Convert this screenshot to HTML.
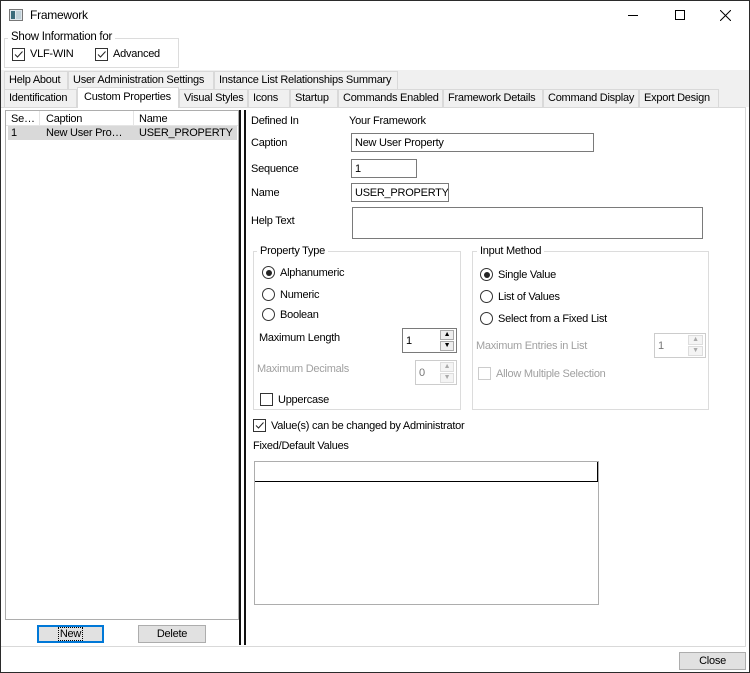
<!DOCTYPE html>
<html><head><style>
*{box-sizing:border-box;margin:0;padding:0}
body{width:750px;height:673px;position:relative;background:#fff;font-family:"Liberation Sans",sans-serif;font-size:11px;letter-spacing:-0.25px;color:#000;overflow:hidden}
.a{position:absolute;white-space:nowrap}
.win{position:absolute;left:0;top:0;width:750px;height:673px;border:1px solid #2b2b2b}
.tab{position:absolute;height:18px;background:#f0f0f0;border:1px solid #d9d9d9;border-bottom:none;padding:2px 0 0 4px;white-space:nowrap;overflow:hidden}
.in{position:absolute;border:1px solid #7a7a7a;background:#fff;padding:3px 3px;white-space:nowrap;overflow:hidden}
.gb{position:absolute;border:1px solid #dcdcdc}
.rb{position:absolute;width:13px;height:13px;border:1px solid #333;border-radius:50%;background:#fff}
.rb.on::after{content:"";position:absolute;left:2.5px;top:2.5px;width:6px;height:6px;border-radius:50%;background:#222}
.cb{position:absolute;width:13px;height:13px;border:1px solid #333;background:#fff}
.dis{color:#a0a0a0}
.btn{position:absolute;background:#e1e1e1;border:1px solid #adadad;text-align:center;padding-top:2px}
</style></head><body>
<div class="win"></div>
<svg class="a" style="left:9px;top:9px" width="14" height="12"><rect x="0.5" y="0.5" width="13" height="11" fill="#dfe6ec" stroke="#777"/><rect x="2" y="2" width="4" height="8" fill="#3a6a7a"/><rect x="7" y="2" width="5" height="8" fill="#c0d0d8"/></svg>
<div class="a" style="left:30px;top:8px;font-size:12px">Framework</div>
<div class="a" style="left:628px;top:15px;width:10px;height:1px;background:#000"></div>
<div class="a" style="left:675px;top:10px;width:10px;height:10px;border:1px solid #000"></div>
<svg class="a" style="left:720px;top:10px" width="11" height="11"><path d="M0 0L11 11M11 0L0 11" stroke="#000" stroke-width="1"/></svg>
<div class="gb" style="left:4px;top:38px;width:175px;height:30px"></div>
<div class="a" style="left:8px;top:31px;background:#fff;padding:0 3px;font-size:11.5px">Show Information for</div>
<div class="cb" style="left:12px;top:48px"></div><svg class="a" style="left:13px;top:49px" width="11" height="11"><path d="M2 5.5L4.5 8L9.5 2.5" stroke="#222" fill="none"/></svg>
<div class="a" style="left:30px;top:48px">VLF-WIN</div>
<div class="cb" style="left:95px;top:48px"></div><svg class="a" style="left:96px;top:49px" width="11" height="11"><path d="M2 5.5L4.5 8L9.5 2.5" stroke="#222" fill="none"/></svg>
<div class="a" style="left:113px;top:48px">Advanced</div>
<div class="a" style="left:1px;top:70px;width:748px;height:37px;background:#f0f0f0"></div>
<div class="tab" style="left:4px;top:71px;width:64px">Help About</div>
<div class="tab" style="left:68px;top:71px;width:146px">User Administration Settings</div>
<div class="tab" style="left:214px;top:71px;width:184px">Instance List Relationships Summary</div>
<div class="tab" style="left:4px;top:89px;width:73px">Identification</div>
<div class="tab" style="left:179px;top:89px;width:69px">Visual Styles</div>
<div class="tab" style="left:248px;top:89px;width:42px">Icons</div>
<div class="tab" style="left:290px;top:89px;width:48px">Startup</div>
<div class="tab" style="left:338px;top:89px;width:105px">Commands Enabled</div>
<div class="tab" style="left:443px;top:89px;width:100px">Framework Details</div>
<div class="tab" style="left:543px;top:89px;width:96px">Command Display</div>
<div class="tab" style="left:639px;top:89px;width:80px">Export Design</div>
<div class="a" style="left:1px;top:107px;width:745px;height:540px;border:1px solid #d9d9d9;border-left:none;background:#fff"></div>
<div class="tab" style="left:77px;top:87px;width:102px;height:21px;background:#fff;padding-top:3px;padding-left:6px">Custom Properties</div>
<div class="a" style="left:5px;top:110px;width:234px;height:510px;border:1px solid #adadad"></div>
<div class="a" style="left:6px;top:111px;width:232px;height:15px;border-bottom:1px solid #e5e5e5"></div>
<div class="a" style="left:39px;top:111px;width:1px;height:15px;background:#e5e5e5"></div>
<div class="a" style="left:133px;top:111px;width:1px;height:15px;background:#e5e5e5"></div>
<div class="a" style="left:11px;top:113px">Se…</div>
<div class="a" style="left:46px;top:113px">Caption</div>
<div class="a" style="left:139px;top:113px">Name</div>
<div class="a" style="left:8px;top:126px;width:229px;height:14px;background:#d9d9d9"></div>
<div class="a" style="left:11px;top:127px">1</div>
<div class="a" style="left:46px;top:127px">New User Pro…</div>
<div class="a" style="left:139px;top:127px">USER_PROPERTY</div>
<div class="btn" style="left:37px;top:625px;width:67px;height:18px;border:2px solid #0078d7;background:#e1e1e1;padding-top:1px"><span style="outline:1px dotted #000;padding:0 1px">New</span></div>
<div class="btn" style="left:138px;top:625px;width:68px;height:18px">Delete</div>
<div class="a" style="left:239px;top:110px;width:2px;height:535px;background:#111"></div>
<div class="a" style="left:244px;top:110px;width:2px;height:535px;background:#111"></div>
<div class="a" style="left:251px;top:115px">Defined In</div>
<div class="a" style="left:349px;top:115px">Your Framework</div>
<div class="a" style="left:251px;top:137px">Caption</div>
<div class="in" style="left:351px;top:133px;width:243px;height:19px">New User Property</div>
<div class="a" style="left:251px;top:163px">Sequence</div>
<div class="in" style="left:351px;top:159px;width:66px;height:19px">1</div>
<div class="a" style="left:251px;top:187px">Name</div>
<div class="in" style="left:351px;top:183px;width:98px;height:19px">USER_PROPERTY</div>
<div class="a" style="left:251px;top:215px">Help Text</div>
<div class="in" style="left:352px;top:207px;width:351px;height:32px"></div>
<div class="gb" style="left:253px;top:251px;width:208px;height:159px"></div>
<div class="a" style="left:257px;top:245px;background:#fff;padding:0 3px">Property Type</div>
<div class="rb on" style="left:262px;top:266px"></div><div class="a" style="left:280px;top:267px">Alphanumeric</div>
<div class="rb" style="left:262px;top:288px"></div><div class="a" style="left:280px;top:289px">Numeric</div>
<div class="rb" style="left:262px;top:308px"></div><div class="a" style="left:280px;top:309px">Boolean</div>
<div class="a" style="left:259px;top:332px">Maximum Length</div>
<div class="in" style="left:402px;top:328px;width:55px;height:25px;padding-top:6px">1</div>
<div class="a" style="left:440px;top:330px;width:14px;height:10px;border:1px solid #aaa;background:#eee;font-size:7px;text-align:center;line-height:8px">▲</div>
<div class="a" style="left:440px;top:341px;width:14px;height:10px;border:1px solid #aaa;background:#eee;font-size:7px;text-align:center;line-height:8px">▼</div>
<div class="a dis" style="left:257px;top:363px">Maximum Decimals</div>
<div class="in" style="left:415px;top:360px;width:42px;height:25px;padding-top:6px;border-color:#ccc;color:#777">0</div>
<div class="a" style="left:440px;top:362px;width:14px;height:10px;border:1px solid #ddd;background:#f4f4f4;font-size:7px;text-align:center;line-height:8px;color:#aaa">▲</div>
<div class="a" style="left:440px;top:373px;width:14px;height:10px;border:1px solid #ddd;background:#f4f4f4;font-size:7px;text-align:center;line-height:8px;color:#aaa">▼</div>
<div class="cb" style="left:260px;top:393px"></div><div class="a" style="left:278px;top:394px">Uppercase</div>
<div class="gb" style="left:472px;top:251px;width:237px;height:159px"></div>
<div class="a" style="left:477px;top:245px;background:#fff;padding:0 3px">Input Method</div>
<div class="rb on" style="left:480px;top:268px"></div><div class="a" style="left:498px;top:269px">Single Value</div>
<div class="rb" style="left:480px;top:290px"></div><div class="a" style="left:498px;top:291px">List of Values</div>
<div class="rb" style="left:480px;top:312px"></div><div class="a" style="left:498px;top:313px">Select from a Fixed List</div>
<div class="a dis" style="left:476px;top:340px">Maximum Entries in List</div>
<div class="in" style="left:654px;top:333px;width:52px;height:25px;padding-top:6px;border-color:#ccc;color:#777">1</div>
<div class="a" style="left:688px;top:335px;width:15px;height:10px;border:1px solid #ddd;background:#f4f4f4;font-size:7px;text-align:center;line-height:8px;color:#aaa">▲</div>
<div class="a" style="left:688px;top:346px;width:15px;height:10px;border:1px solid #ddd;background:#f4f4f4;font-size:7px;text-align:center;line-height:8px;color:#aaa">▼</div>
<div class="cb" style="left:478px;top:367px;border-color:#ccc"></div><div class="a dis" style="left:496px;top:368px">Allow Multiple Selection</div>
<div class="cb" style="left:253px;top:419px"></div><svg class="a" style="left:254px;top:420px" width="11" height="11"><path d="M2 5.5L4.5 8L9.5 2.5" stroke="#222" fill="none"/></svg>
<div class="a" style="left:271px;top:420px">Value(s) can be changed by Administrator</div>
<div class="a" style="left:253px;top:440px">Fixed/Default Values</div>
<div class="a" style="left:254px;top:461px;width:345px;height:144px;border:1px solid #adadad"></div>
<div class="a" style="left:255px;top:481px;width:343px;height:1px;background:#000"></div>
<div class="a" style="left:597px;top:462px;width:1px;height:20px;background:#000"></div>
<div class="btn" style="left:679px;top:652px;width:67px;height:18px">Close</div>
</body></html>
